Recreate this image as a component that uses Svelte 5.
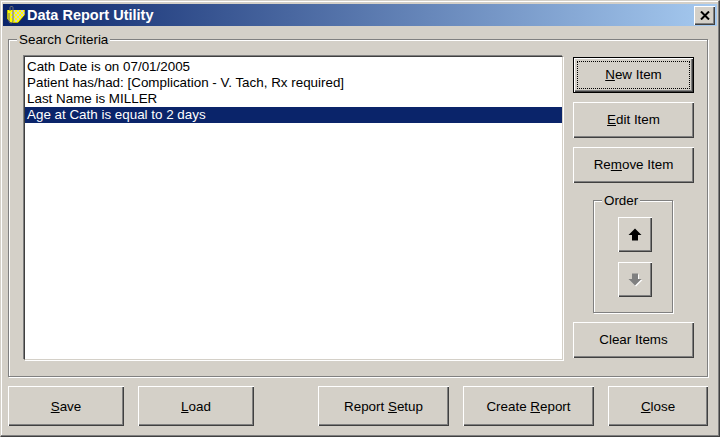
<script>
  const criteria = [
    'Cath Date is on 07/01/2005',
    'Patient has/had: [Complication - V. Tach, Rx required]',
    'Last Name is MILLER',
    'Age at Cath is equal to 2 days'
  ]
  let selected = 3
</script>

<div class="window">
  <div class="title">
    <svg class="appicon" width="19" height="19" viewBox="0 0 19 19">
      <path d="M1 4h18v5l-7 8H5l-4-4z" fill="#ffff00"/>
      <path d="M7 4h2v2H7zM11 4h2v2h-2zM15 4h2v2h-2zM5 6h2v2H5zM9 6h2v2H9zM13 6h2v2h-2zM17 6h2v2h-2zM7 8h2v2H7zM11 8h2v2h-2zM15 8h2v2h-2zM5 10h2v2H5zM9 10h2v2H9zM13 10h2v2h-2zM7 12h2v2H7zM11 12h2v2h-2zM9 14h2v2H9z" fill="#d2d2c4"/>
      <path d="M1 4v9l4 4h7l7-8V4" fill="none" stroke="#202020" stroke-width="0.6"/>
      <path d="M4 5V1.5q0-1 1-1h1q1 0 1 1V15q0 2-2 2t-2-2V7" fill="none" stroke="#707070" stroke-width="1"/>
    </svg>
    <span class="caption">Data Report Utility</span>
    <button class="closebox" aria-label="Close">
      <svg width="10" height="9" viewBox="0 0 10 9"><path d="M1 0.5l8 8M9 0.5l-8 8" stroke="#000" stroke-width="2"/></svg>
    </button>
  </div>

  <div class="client">
    <div class="group search">
      <span class="legend">Search Criteria</span>
      <ul class="list">
        {#each criteria as item, i}
          <li class:selected={i === selected}>{item}</li>
        {/each}
      </ul>
      <div class="side">
        <button class="btn side-btn default"><span class="focus"><u>N</u>ew Item</span></button>
        <button class="btn side-btn"><u>E</u>dit Item</button>
        <button class="btn side-btn">Re<u>m</u>ove Item</button>
        <div class="group order">
          <span class="legend">Order</span>
          <button class="btn arrow" aria-label="Move up">
            <svg width="14" height="13" viewBox="0 0 14 13"><path d="M7 0.5L13.5 7H10V12.5H4V7H0.5z" fill="#000"/></svg>
          </button>
          <button class="btn arrow" aria-label="Move down" disabled>
            <svg width="15" height="14" viewBox="0 0 15 14"><path d="M5 1.5H11V7H14.5L8 13.5 1.5 7H5z" fill="#fff"/><path d="M4 0.5H10V6H13.5L7 12.5 0.5 6H4z" fill="#808080"/></svg>
          </button>
        </div>
        <button class="btn side-btn">Clear Items</button>
      </div>
    </div>

    <div class="actions">
      <button class="btn wide"><u>S</u>ave</button>
      <button class="btn wide"><u>L</u>oad</button>
      <span class="spacer"></span>
      <button class="btn mid">Report <u>S</u>etup</button>
      <button class="btn mid">Create <u>R</u>eport</button>
      <button class="btn last"><u>C</u>lose</button>
    </div>
  </div>
</div>

<style>
  :global(body) {
    margin: 0;
    background: #d4d0c8;
  }

  .window {
    box-sizing: border-box;
    display: flex;
    flex-direction: column;
    width: 720px;
    height: 437px;
    padding: 3px 2px 1px 2px;
    background: #d4d0c8;
    border-top: 1px solid #d4d0c8;
    border-left: 1px solid #d4d0c8;
    border-right: 1px solid #404040;
    border-bottom: 1px solid #404040;
    box-shadow: inset -1px -1px 0 #808080, inset 1px 1px 0 #fff;
    font-family: Tahoma, "Liberation Sans", Arial, sans-serif;
    font-size: 13.4px;
    color: #000;
  }

  .title {
    display: flex;
    align-items: center;
    flex: none;
    height: 22px;
    padding: 0 2px 0 3px;
    background: linear-gradient(to right, #0a246a, #a6caf0);
    color: #fff;
    font-weight: bold;
    font-size: 14.5px;
  }

  .appicon {
    flex: none;
    margin: 0 2px 0 0;
  }

  .caption {
    flex: 1;
  }

  .closebox {
    box-sizing: border-box;
    display: flex;
    align-items: center;
    justify-content: center;
    width: 21px;
    height: 19px;
    padding: 0;
    background: #d4d0c8;
    border: 0;
    box-shadow: inset 1px 1px 0 #fff, inset -1px -1px 0 #404040, inset -2px -2px 0 #808080;
  }

  .client {
    flex: 1;
    display: flex;
    flex-direction: column;
    padding: 13px 9px 6px 5px;
    min-height: 0;
  }

  .group {
    position: relative;
    box-sizing: border-box;
    border: 1px solid #808080;
    box-shadow: 1px 1px 0 #fff, inset 1px 1px 0 #fff;
  }

  .legend {
    position: absolute;
    top: -8px;
    left: 8px;
    padding: 0 2px;
    background: #d4d0c8;
    line-height: 15px;
  }

  .search {
    display: flex;
    flex: none;
    height: 338px;
    padding: 16px 13px 16px 15px;
  }

  .list {
    flex: 1;
    box-sizing: border-box;
    margin: 0;
    padding: 2px 0;
    list-style: none;
    background: #fff;
    border: 1px solid;
    border-color: #404040 #d4d0c8 #d4d0c8 #404040;
    box-shadow: -1px -1px 0 #808080, 1px 1px 0 #fff;
    line-height: 16px;
    white-space: nowrap;
  }

  .list li {
    height: 16px;
    padding-left: 2px;
  }

  .list li.selected {
    background: #0a246a;
    color: #fff;
  }

  .side {
    flex: none;
    display: flex;
    flex-direction: column;
    align-items: center;
    width: 121px;
    margin-left: 10px;
    margin-top: 1px;
  }

  .btn {
    box-sizing: border-box;
    padding: 0;
    background: #d4d0c8;
    border: 0;
    box-shadow: inset 1px 1px 0 #fff, inset -1px -1px 0 #404040, inset -2px -2px 0 #808080;
    font: inherit;
    color: #000;
  }

  .side-btn {
    width: 121px;
    height: 36px;
    flex: none;
    margin-bottom: 9px;
    padding-bottom: 2px;
  }

  .side-btn:last-child {
    margin-bottom: 0;
  }

  .default {
    box-shadow: inset 0 0 0 1px #000, inset 2px 2px 0 #fff, inset -2px -2px 0 #404040, inset -3px -3px 0 #808080;
    padding: 4px;
  }

  .focus {
    display: block;
    box-sizing: border-box;
    height: 28px;
    line-height: 27px;
    outline: 1px dotted #000;
    outline-offset: -1px;
  }

  .order {
    display: flex;
    flex-direction: column;
    align-items: center;
    gap: 10px;
    flex: none;
    width: 80px;
    height: 113px;
    margin: 8px 0 9px -1px;
    padding: 16px 0 0 4px;
  }

  .arrow {
    display: flex;
    align-items: center;
    justify-content: center;
    width: 34px;
    height: 35px;
    flex: none;
  }

  .actions {
    flex: none;
    display: flex;
    gap: 14px;
    margin-top: 9px;
    height: 40px;
  }

  .actions .btn {
    height: 40px;
    flex: none;
  }

  .spacer {
    width: 36px;
    flex: none;
  }

  .wide {
    width: 116px;
  }

  .mid {
    width: 131px;
  }

  .last {
    width: 100px;
  }
</style>
